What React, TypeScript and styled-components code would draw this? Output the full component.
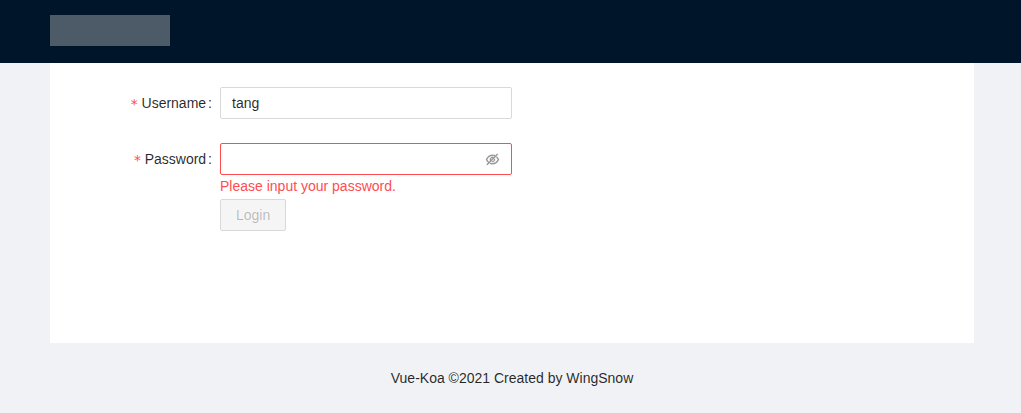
import React, { useState } from "react";
import styled, { createGlobalStyle } from "styled-components";
import { AiOutlineEye, AiOutlineEyeInvisible } from "react-icons/ai";

const GlobalStyle = createGlobalStyle`
  *, *::before, *::after { box-sizing: border-box; }
  body {
    margin: 0;
    background: #f0f2f5;
    color: rgba(0, 0, 0, 0.85);
    font-family: "Liberation Sans", Arial, sans-serif;
    font-size: 14px;
    line-height: 22px;
  }
  input, button { font: inherit; color: inherit; }
`;

const Header = styled.header`
  height: 63px;
  padding: 15px 47px 0 50px;
  background: #001529;
`;

const Logo = styled.div`
  width: 120px;
  height: 31px;
  background: rgba(255, 255, 255, 0.3);
`;

const Main = styled.main`
  padding: 0 47px 0 50px;
`;

const Panel = styled.section`
  min-height: 280px;
  padding: 24px;
  background: #fff;
`;

const Field = styled.div<{ $compact?: boolean }>`
  display: grid;
  grid-template-columns: 1fr 2fr 3fr;
  margin-bottom: ${(p) => (p.$compact ? "0" : "24px")};
`;

const Label = styled.label`
  display: flex;
  align-items: center;
  justify-content: flex-end;
  height: 32px;
  padding-right: 8px;

  &::after {
    content: ":";
    margin-left: 2px;
  }
`;

const Required = styled.span`
  margin-right: 3px;
  padding-top: 2px;
  color: #ff4d4f;
  font-family: "DejaVu Sans Mono", monospace;
  font-size: 14px;
  line-height: 14px;
`;

const Control = styled.div`
  grid-column: 2;
`;

const InputBox = styled.div<{ $error?: boolean }>`
  display: flex;
  align-items: center;
  height: 32px;
  padding: 0 11px;
  background: #fff;
  border: 1px solid ${(p) => (p.$error ? "#ff4d4f" : "#d9d9d9")};
  border-radius: 2px;
`;

const Input = styled.input`
  flex: 1;
  min-width: 0;
  padding: 0;
  border: 0;
  outline: 0;
  background: transparent;
`;

const Toggle = styled.button`
  display: flex;
  padding: 0;
  border: 0;
  background: none;
  color: #8c8c8c;
  cursor: pointer;

  svg {
    stroke-width: 20;
  }
`;

const ErrorText = styled.div`
  height: 24px;
  color: #ff4d4f;
`;

const Submit = styled.button`
  height: 32px;
  padding: 0 15px;
  border: 1px solid #d9d9d9;
  border-radius: 2px;
  background: #1890ff;
  color: #fff;

  &:disabled {
    background: #f5f5f5;
    color: rgba(0, 0, 0, 0.25);
  }
`;

const Footer = styled.footer`
  padding: 24px 47px 24px 50px;
  text-align: center;
`;

export default function App() {
  const [username, setUsername] = useState("tang");
  const [password, setPassword] = useState("");
  const [visible, setVisible] = useState(false);
  const missing = password === "";

  return (
    <>
      <GlobalStyle />
      <Header>
        <Logo />
      </Header>
      <Main>
        <Panel>
          <form onSubmit={(e) => e.preventDefault()}>
            <Field>
              <Label htmlFor="username">
                <Required>*</Required>Username
              </Label>
              <Control>
                <InputBox>
                  <Input id="username" value={username} onChange={(e) => setUsername(e.target.value)} />
                </InputBox>
              </Control>
            </Field>
            <Field $compact={missing}>
              <Label htmlFor="password">
                <Required>*</Required>Password
              </Label>
              <Control>
                <InputBox $error={missing}>
                  <Input
                    id="password"
                    type={visible ? "text" : "password"}
                    value={password}
                    onChange={(e) => setPassword(e.target.value)}
                  />
                  <Toggle type="button" aria-label="Show password" onClick={() => setVisible(!visible)}>
                    {visible ? <AiOutlineEye size={15} /> : <AiOutlineEyeInvisible size={15} />}
                  </Toggle>
                </InputBox>
                {missing && <ErrorText role="alert">Please input your password.</ErrorText>}
              </Control>
            </Field>
            <Field $compact>
              <Control>
                <Submit type="submit" disabled={missing || username === ""}>
                  Login
                </Submit>
              </Control>
            </Field>
          </form>
        </Panel>
      </Main>
      <Footer>Vue-Koa ©2021 Created by WingSnow</Footer>
    </>
  );
}
